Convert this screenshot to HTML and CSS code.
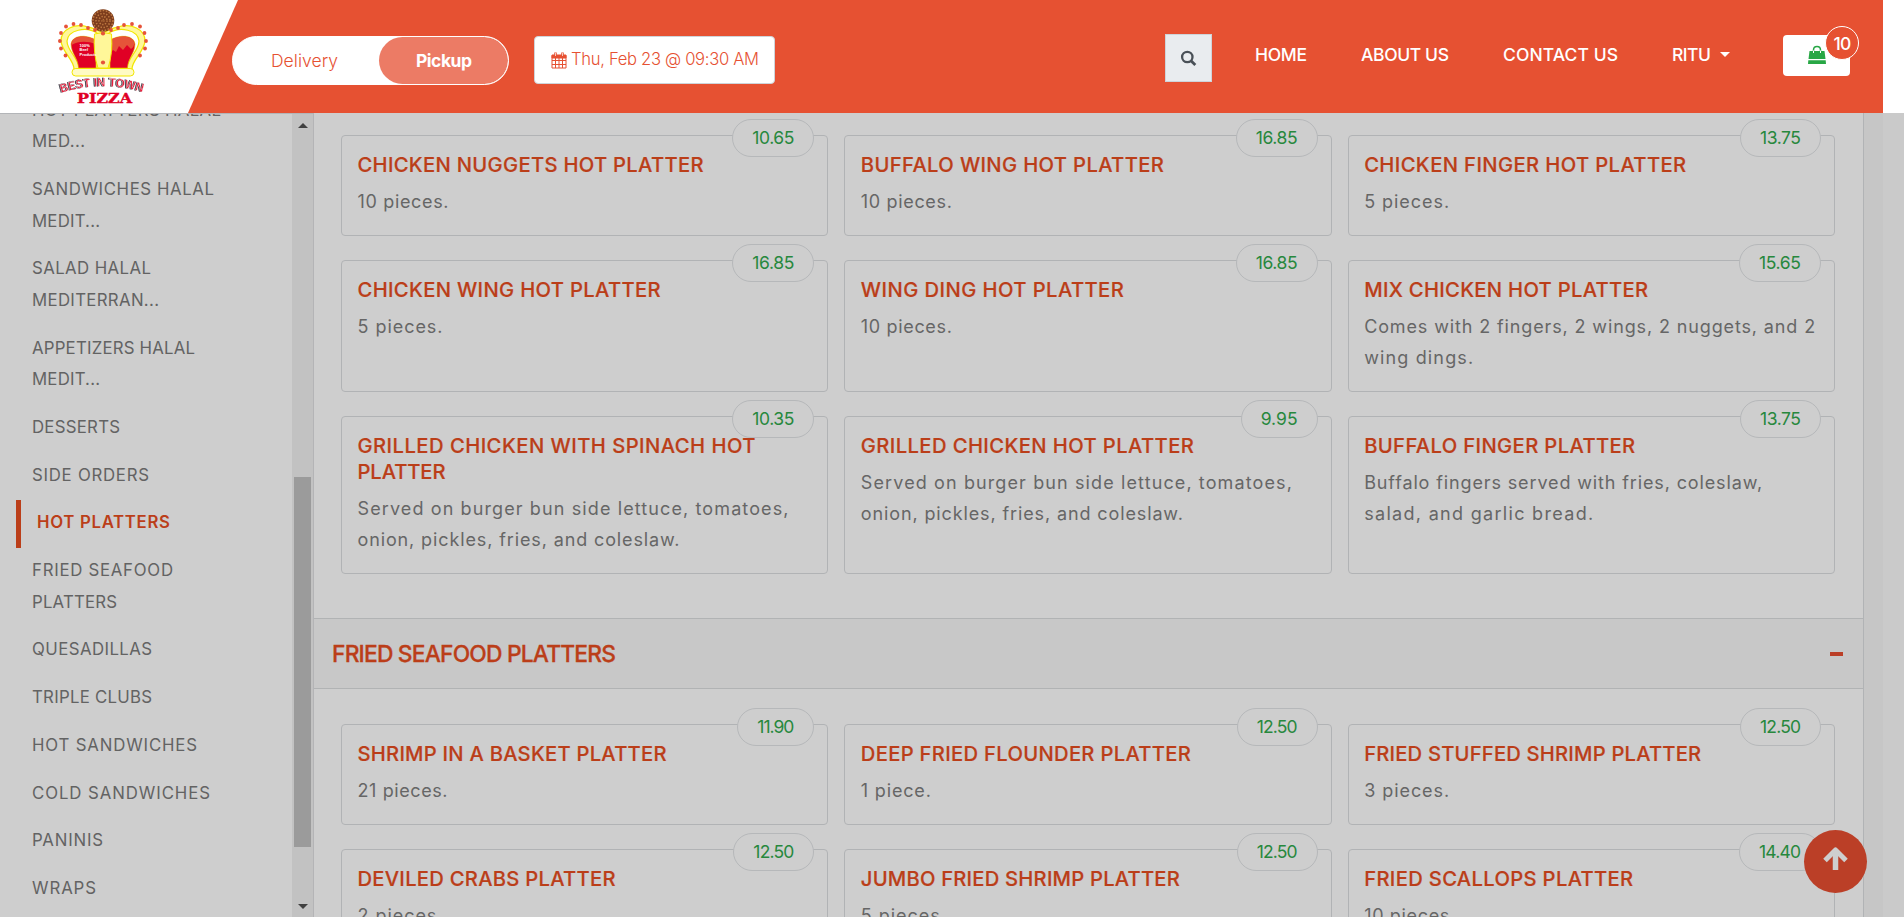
FILE: index.html
```html
<!DOCTYPE html>
<html lang="en">
<head>
<meta charset="utf-8">
<title>Best In Town Pizza - Menu</title>
<link rel="stylesheet" href="styles.css">
</head>
<body>
<header class="header">
  <div class="brand">
    <svg class="logo" viewBox="0 0 90 98" width="90" height="98" aria-label="Best In Town Pizza">
      <path d="M16 61C16 52 4 44 3 33C3 21 17 15 30 19Q39 21 45 25Q51 21 60 19C73 15 87 21 87 33C86 44 74 52 74 61Z" fill="#fff799" stroke="#f2e600" stroke-width="1.3"/>
      <path d="M21 60C20 49 9 43 9 33C10 22 28 18 39 25V60ZM69 60C70 49 81 43 81 33C80 22 62 18 51 25V60Z" fill="#fff" stroke="#f2e600" stroke-width="1.2"/>
      <path d="M20.500 60C20 50 13 45 13 36C14 27 28 26 38 32V60ZM69.500 60C70 50 77 45 77 36C76 27 62 26 52 32V60Z" fill="#e00025" stroke="#e8c400" stroke-width=".6"/>
      <path d="M13.500 35C16 27 29 27 38 32V36Q24 31 13.500 37ZM76.500 35C74 27 61 27 52 32V46L55 42L58 44L61 38L65 42L69 37L73 41Q76 39 76.500 35Z" fill="#e65339"/>
      <path d="M36.500 26Q45 23 53.500 26Q55 46 50 60H40Q35 46 36.500 26Z" fill="#fff799" stroke="#f2e600"/>
      <circle cx="45" cy="12.500" r="11.300" fill="#7c3c1c"/>
      <g fill="none" stroke="#bf7a42" stroke-width="1.5"><circle cx="45" cy="12.500" r="10" stroke-dasharray="1.6 1.5"/><circle cx="45" cy="12.500" r="7" stroke-dasharray="1.4 1.6"/><circle cx="45" cy="12.500" r="4" stroke-dasharray="1.4 1.4"/><circle cx="45" cy="12.500" r="1" stroke-dasharray="1 1"/></g>
      <rect x="14" y="60.500" width="62" height="7.500" rx="3.700" fill="#fffbc4" stroke="#f2e600"/>
      <g fill="#e65339"><circle cx="7.500" cy="47.500" r="1.900"/><circle cx="3" cy="40.500" r="1.900"/><circle cx="1.900" cy="33" r="1.900"/><circle cx="3" cy="25" r="1.900"/><circle cx="8" cy="18.500" r="1.900"/><circle cx="15.500" cy="16" r="1.900"/><circle cx="23" cy="17" r="1.900"/><circle cx="30" cy="20" r="1.900"/><circle cx="37" cy="22" r="1.900"/><circle cx="45" cy="25.500" r="2.100"/><circle cx="53" cy="22" r="1.900"/><circle cx="60" cy="20" r="1.900"/><circle cx="66" cy="17" r="1.900"/><circle cx="74" cy="16" r="1.900"/><circle cx="82" cy="18.500" r="1.900"/><circle cx="86.500" cy="25" r="1.900"/><circle cx="88" cy="33" r="1.900"/><circle cx="87" cy="40.500" r="1.900"/><circle cx="82" cy="47.500" r="1.900"/><circle cx="45" cy="54.500" r="2.100"/></g>
      <g class="logo-small"><text x="21.500" y="38.500">100%</text><text x="21.500" y="43">Beef</text><text x="21.500" y="47.500">Products</text></g>
      <path id="arc" d="M4 84Q45 71.500 86 84" fill="none"/>
      <text class="logo-arc shadow" dx="-1" dy=".5"><textPath href="#arc" textLength="83" lengthAdjust="spacingAndGlyphs">BEST IN TOWN</textPath></text>
      <text class="logo-pizza" x="19" y="94.500" textLength="55" lengthAdjust="spacingAndGlyphs">PIZZA</text>
    </svg>
  </div>
  <div class="bar">
    <div class="toggle">
      <span class="toggle-off"><span data-w="66">Delivery</span></span>
      <span class="toggle-on"><span data-w="55">Pickup</span></span>
    </div>
    <div class="date">
      <svg width="16" height="17" viewBox="0 0 16 17" fill="none" stroke="#e65132"><path d="M1 3.500H15V16H1ZM1 8.500H15M1 12.500H15M4.500 6V16M8 6V16M11.500 6V16"/><path d="M1 3H15V6H1Z" fill="#e65132"/><path d="M4.500 .5V4M11.500 .5V4" stroke-width="2.500"/><path d="M4.500 1V4M11.500 1V4" stroke="#f7c9be"/></svg>
      <span data-w="187">Thu, Feb 23 @ 09:30 AM</span>
    </div>
    <div class="search"><svg width="17" height="17" viewBox="0 0 17 17" fill="none" stroke="#495057" stroke-width="2.300"><circle cx="7.300" cy="7" r="5.200"/><path d="M11 10.700L15.300 15" stroke-width="2.800"/></svg></div>
    <nav class="nav">
      <span data-w="51">HOME</span>
      <span data-w="87">ABOUT US</span>
      <span data-w="114">CONTACT US</span>
      <span data-w="38">RITU</span>
      <i class="caret"></i>
    </nav>
    <div class="cart">
      <svg width="18" height="20" viewBox="0 0 18 20"><path d="M5.500 8V5Q5.500 1.500 9 1.500T12.500 5V8" fill="none" stroke="#28a745" stroke-width="1.500"/><path d="M1.500 6H16.500L17.500 14H.5ZM.3 15.200H17.700L18 19H0Z" fill="#28a745"/><path d="M5.500 8V5.500M12.500 8V5.500" stroke="#fff"/></svg>
      <span class="count">10</span>
    </div>
  </div>
</header>
<div class="page">
  <aside class="sidebar">
    <ul class="cats">
      <li><span data-w="188">HOT PLATTERS HALAL</span><span data-w="52">MED...</span></li>
      <li><span data-w="181">SANDWICHES HALAL</span><span data-w="67">MEDIT...</span></li>
      <li><span data-w="118">SALAD HALAL</span><span data-w="126">MEDITERRAN...</span></li>
      <li><span data-w="162">APPETIZERS HALAL</span><span data-w="67">MEDIT...</span></li>
      <li><span data-w="87">DESSERTS</span></li>
      <li><span data-w="116">SIDE ORDERS</span></li>
      <li class="active"><span data-w="132">HOT PLATTERS</span></li>
      <li><span data-w="140">FRIED SEAFOOD</span><span data-w="84">PLATTERS</span></li>
      <li><span data-w="119">QUESADILLAS</span></li>
      <li><span data-w="119">TRIPLE CLUBS</span></li>
      <li><span data-w="164">HOT SANDWICHES</span></li>
      <li><span data-w="177">COLD SANDWICHES</span></li>
      <li><span data-w="70">PANINIS</span></li>
      <li><span data-w="63">WRAPS</span></li>
    </ul>
    <div class="scroll"><i class="up"></i><i class="thumb"></i><i class="down"></i></div>
  </aside>
  <main class="menu">
    <section class="grid">
      <article class="card"><b class="price"><span data-w="41">10.65</span></b><h3><span data-w="345">CHICKEN NUGGETS HOT PLATTER</span></h3><p><span data-w="90">10 pieces.</span></p></article>
      <article class="card"><b class="price"><span data-w="41">16.85</span></b><h3><span data-w="302">BUFFALO WING HOT PLATTER</span></h3><p><span data-w="90">10 pieces.</span></p></article>
      <article class="card"><b class="price"><span data-w="40">13.75</span></b><h3><span data-w="321">CHICKEN FINGER HOT PLATTER</span></h3><p><span data-w="84">5 pieces.</span></p></article>
      <article class="card"><b class="price"><span data-w="41">16.85</span></b><h3><span data-w="302">CHICKEN WING HOT PLATTER</span></h3><p><span data-w="84">5 pieces.</span></p></article>
      <article class="card"><b class="price"><span data-w="41">16.85</span></b><h3><span data-w="262">WING DING HOT PLATTER</span></h3><p><span data-w="90">10 pieces.</span></p></article>
      <article class="card"><b class="price"><span data-w="41">15.65</span></b><h3><span data-w="283">MIX CHICKEN HOT PLATTER</span></h3><p><span data-w="450">Comes with 2 fingers, 2 wings, 2 nuggets, and 2</span><span data-w="108">wing dings.</span></p></article>
      <article class="card"><b class="price"><span data-w="41">10.35</span></b><h3><span data-w="397">GRILLED CHICKEN WITH SPINACH HOT</span><span data-w="87">PLATTER</span></h3><p><span data-w="430">Served on burger bun side lettuce, tomatoes,</span><span data-w="321">onion, pickles, fries, and coleslaw.</span></p></article>
      <article class="card"><b class="price"><span data-w="36">9.95</span></b><h3><span data-w="332">GRILLED CHICKEN HOT PLATTER</span></h3><p><span data-w="430">Served on burger bun side lettuce, tomatoes,</span><span data-w="321">onion, pickles, fries, and coleslaw.</span></p></article>
      <article class="card"><b class="price"><span data-w="40">13.75</span></b><h3><span data-w="270">BUFFALO FINGER PLATTER</span></h3><p><span data-w="397">Buffalo fingers served with fries, coleslaw,</span><span data-w="228">salad, and garlic bread.</span></p></article>
    </section>
    <div class="section-head"><h2><span data-w="283">FRIED SEAFOOD PLATTERS</span></h2><i class="minus"></i></div>
    <section class="grid grid-next">
      <article class="card"><b class="price"><span data-w="36">11.90</span></b><h3><span data-w="308">SHRIMP IN A BASKET PLATTER</span></h3><p><span data-w="89">21 pieces.</span></p></article>
      <article class="card"><b class="price"><span data-w="40">12.50</span></b><h3><span data-w="329">DEEP FRIED FLOUNDER PLATTER</span></h3><p><span data-w="69">1 piece.</span></p></article>
      <article class="card"><b class="price"><span data-w="40">12.50</span></b><h3><span data-w="336">FRIED STUFFED SHRIMP PLATTER</span></h3><p><span data-w="84">3 pieces.</span></p></article>
      <article class="card"><b class="price"><span data-w="40">12.50</span></b><h3><span data-w="257">DEVILED CRABS PLATTER</span></h3><p><span data-w="84">2 pieces.</span></p></article>
      <article class="card"><b class="price"><span data-w="40">12.50</span></b><h3><span data-w="318">JUMBO FRIED SHRIMP PLATTER</span></h3><p><span data-w="84">5 pieces.</span></p></article>
      <article class="card"><b class="price"><span data-w="41">14.40</span></b><h3><span data-w="268">FRIED SCALLOPS PLATTER</span></h3><p><span data-w="90">10 pieces.</span></p></article>
    </section>
  </main>
  <div class="gutter"></div>
</div>
<div class="to-top"><svg width="27" height="25" viewBox="0 0 27 25" fill="none" stroke="#cecece" stroke-width="5.500" stroke-linejoin="round"><path d="M13.500 24V5"/><path d="M3 14.500L13.500 4L24 14.500" stroke-width="5"/></svg></div>
<script src="fit.js"></script>
</body>
</html>
```
FILE: styles.css
```css
* { box-sizing: border-box; }
body { margin: 0; height: 917px; overflow: hidden; background: #cecece; font-family: Inter, "Open Sans", sans-serif; display: flex; flex-direction: column; }
h2, h3, p, ul { margin: 0; padding: 0; }
[data-w] { white-space: nowrap; }

.header { height: 113px; flex: none; display: flex; background: #fff; padding-right: 21px; position: relative; z-index: 2; }
.brand { width: 188px; flex: none; padding: 8px 0 0 58px; }
.logo { display: block; }
.logo-small text { font: bold 4px "Liberation Sans", sans-serif; fill: #fff; }
.logo-arc { font: bold 12px "Liberation Sans", sans-serif; fill: #e5203d; stroke: #fff; stroke-width: .3px; filter: drop-shadow(-.8px .8px 0 #33313a); }
.logo-pizza { font: bold 13.500px "DejaVu Serif", serif; fill: #e00025; stroke: #e00025; stroke-width: .4px; }
.bar { flex: 1; display: flex; align-items: flex-start; background: #e65132; clip-path: polygon(50px 0, 100% 0, 100% 100%, 0 100%); padding-left: 44px; }
.toggle { display: flex; width: 277px; height: 49px; margin-top: 36px; border: 1px solid #fff; border-radius: 25px; background: #fff; overflow: hidden; color: #e65132; font-size: 17.500px; line-height: 47px; }
.toggle-off { width: 146px; padding-left: 38px; font-weight: 300; }
.toggle-on { flex: 1; padding-left: 37px; background: #ec7b65; color: #fff; border-radius: 24px; font-weight: 700; }
.date { width: 241px; height: 48px; margin: 36px 0 0 25px; padding-left: 16px; display: flex; align-items: center; gap: 4px; border: 1px solid #ced4da; border-radius: 4px; background: #fff; color: #e65132; font-size: 16.600px; font-weight: 300; line-height: 46px; }
.date span { margin-top: -2px; }
.search { width: 47px; height: 48px; margin: 34px 0 0 390px; display: flex; align-items: center; justify-content: center; background: #e9ecef; border: 1px solid #ced4da; }
.nav { display: flex; margin: 40px 0 0 43px; gap: 54px; width: 528px; font-size: 17.500px; font-weight: 500; line-height: 30px; color: #fff; }
.caret { margin: 12px 0 0 -45px; width: 10px; height: 5px; border: 5px solid transparent; border-top-color: #fff; border-bottom: 0; }
.cart { position: relative; width: 67px; height: 41px; margin-top: 35px; padding: 10px 0 0 25px; background: #fff; border-radius: 4px; }
.cart svg { display: block; }
.count { position: absolute; left: 42px; top: -9px; width: 34px; height: 34px; border: 1px solid #fff; border-radius: 50%; background: #e65132; color: #fff; font-size: 17.500px; font-weight: 500; line-height: 33px; text-align: center; letter-spacing: -.8px; }

.page { flex: 1; min-height: 0; display: flex; overflow: hidden; }
.sidebar { width: 314px; flex: none; display: flex; border-right: 1px solid #b4b4b6; border-top: 1px solid #b3b5b8; overflow: hidden; }
.cats { width: 292px; list-style: none; margin-top: -27px; color: #636363; font-size: 16.800px; line-height: 31.680px; }
.cats li { padding: 7.500px 0 8.500px 32px; }
.cats li span { display: block; width: max-content; }
.cats .active { margin-left: 16px; padding-left: 16px; border-left: 5px solid #bb3e19; color: #bb3e19; font-weight: 600; }
.scroll { width: 21px; background: #c2c2c2; display: flex; flex-direction: column; align-items: flex-start; }
.up, .down { width: 10px; height: 5px; margin-left: 6px; border: 5px solid transparent; }
.up { margin-top: 9px; border-bottom-color: #404040; border-top: 0; }
.down { margin-top: 57px; border-top-color: #404040; border-bottom: 0; }
.thumb { width: 17px; height: 370px; margin: 349px 0 0 2px; background: #9b9b9b; flex: none; }

.menu { width: 1549px; flex: none; }
.grid { display: grid; grid-template-columns: repeat(3, 1fr); grid-template-rows: 101px 132px 158px; gap: 24px 16px; padding: 22px 28px 44px 27px; }
.grid-next { grid-template-rows: 101px 101px; padding: 35px 28px 0 27px; }
.card { position: relative; z-index: 0; border: 1px solid #b1b3b5; border-radius: 4px; padding: 15.500px 0 0 15.500px; }
.card h3 { font-size: 20.200px; font-weight: 500; line-height: 26px; color: #bb3e19; -webkit-text-stroke: .2px #bb3e19; }
.card p { margin-top: 8px; font-size: 18px; line-height: 31.700px; color: #666; }
.card h3 span, .card p span { display: block; width: max-content; }
.price { position: absolute; z-index: -1; right: 13px; top: -17px; height: 38px; padding: 0 19px; border: 1px solid #b6b8ba; border-radius: 19px; background: #cecece; color: #27883d; font-size: 17.500px; font-weight: 400; line-height: 35px; }
.section-head { height: 71px; display: flex; align-items: center; justify-content: space-between; background: #c8c8c8; border: 1px solid #b1b3b4; border-width: 1px 0; padding: 0 20px 0 18px; color: #bb3e19; }
.section-head h2 { font-size: 22.800px; font-weight: 500; line-height: 30px; -webkit-text-stroke: .3px #bb3e19; }
.minus { width: 13px; height: 4px; background: #bb3f27; }
.gutter { flex: 1; border-left: 1px solid #b1b3b5; background: linear-gradient(90deg, #c6c6c6 19px, #cacaca 19px); }
.to-top { position: absolute; left: 1804px; top: 830px; width: 63px; height: 63px; border-radius: 50%; background: #bb3f27; display: flex; align-items: flex-start; justify-content: center; padding-top: 16px; z-index: 3; }
```
FILE: fit.js
```js
// Tracks each label out to its nominal width (px).
document.querySelectorAll('[data-w]').forEach(function (el) {
  var range = document.createRange();
  range.selectNodeContents(el);
  var natural = range.getBoundingClientRect().width;
  var count = el.textContent.length;
  var spacing = (Number(el.dataset.w) + 1 - natural) / (count - 1);
  el.style.letterSpacing = spacing.toFixed(3) + 'px';
  el.style.marginRight = (-spacing).toFixed(3) + 'px';
});
```
